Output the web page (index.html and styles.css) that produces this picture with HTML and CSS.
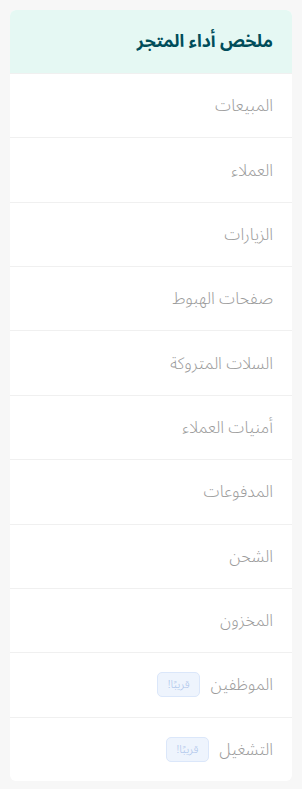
FILE: index.html
```html
<!DOCTYPE html>
<html lang="ar" dir="rtl">
<head>
  <meta charset="UTF-8">
  <meta name="viewport" content="width=device-width, initial-scale=1.0">
  <title>ملخص أداء المتجر</title>
  <link rel="stylesheet" href="styles.css">
</head>
<body>
  <div class="report-card">
    <div class="report-header">ملخص أداء المتجر</div>
    <ul class="report-list">
      <li class="report-item">المبيعات</li>
      <li class="report-item">العملاء</li>
      <li class="report-item">الزيارات</li>
      <li class="report-item">صفحات الهبوط</li>
      <li class="report-item">السلات المتروكة</li>
      <li class="report-item">أمنيات العملاء</li>
      <li class="report-item">المدفوعات</li>
      <li class="report-item">الشحن</li>
      <li class="report-item">المخزون</li>
      <li class="report-item">الموظفين <span class="soon-badge">قريبًا!</span></li>
      <li class="report-item">التشغيل <span class="soon-badge">قريبًا!</span></li>
    </ul>
  </div>
</body>
</html>
```

FILE: styles.css
```css
body {
  font-family: "Noto Sans Arabic", "DejaVu Sans", sans-serif;
  background-color: #f7f7f7;
  margin: 0;
  padding: 10px;
}
.report-card {
  background-color: #ffffff;
  border-radius: 6px;
  overflow: hidden;
}
.report-header {
  height: 63px;
  box-sizing: border-box;
  background-color: #e5f8f3;
  color: #004d5a;
  font-size: 17.5px;
  font-weight: bold;
  display: flex;
  align-items: center;
  padding: 0 19px;
}
.report-list {
  list-style: none;
  margin: 0;
  padding: 0;
}
.report-item {
  height: 64.36px;
  box-sizing: border-box;
  border-top: 1px solid #f0f0f0;
  display: flex;
  align-items: center;
  gap: 10px;
  padding: 0 19px;
  color: #9b9b9b;
  font-size: 16.5px;
  font-weight: 300;
}
.soon-badge {
  display: inline-flex;
  align-items: center;
  justify-content: center;
  height: 25px;
  box-sizing: border-box;
  padding: 0 10px;
  background-color: #eef4fd;
  border: 1px solid #dbe7fa;
  border-radius: 5px;
  color: #a9c2ea;
  font-size: 11px;
}
```
